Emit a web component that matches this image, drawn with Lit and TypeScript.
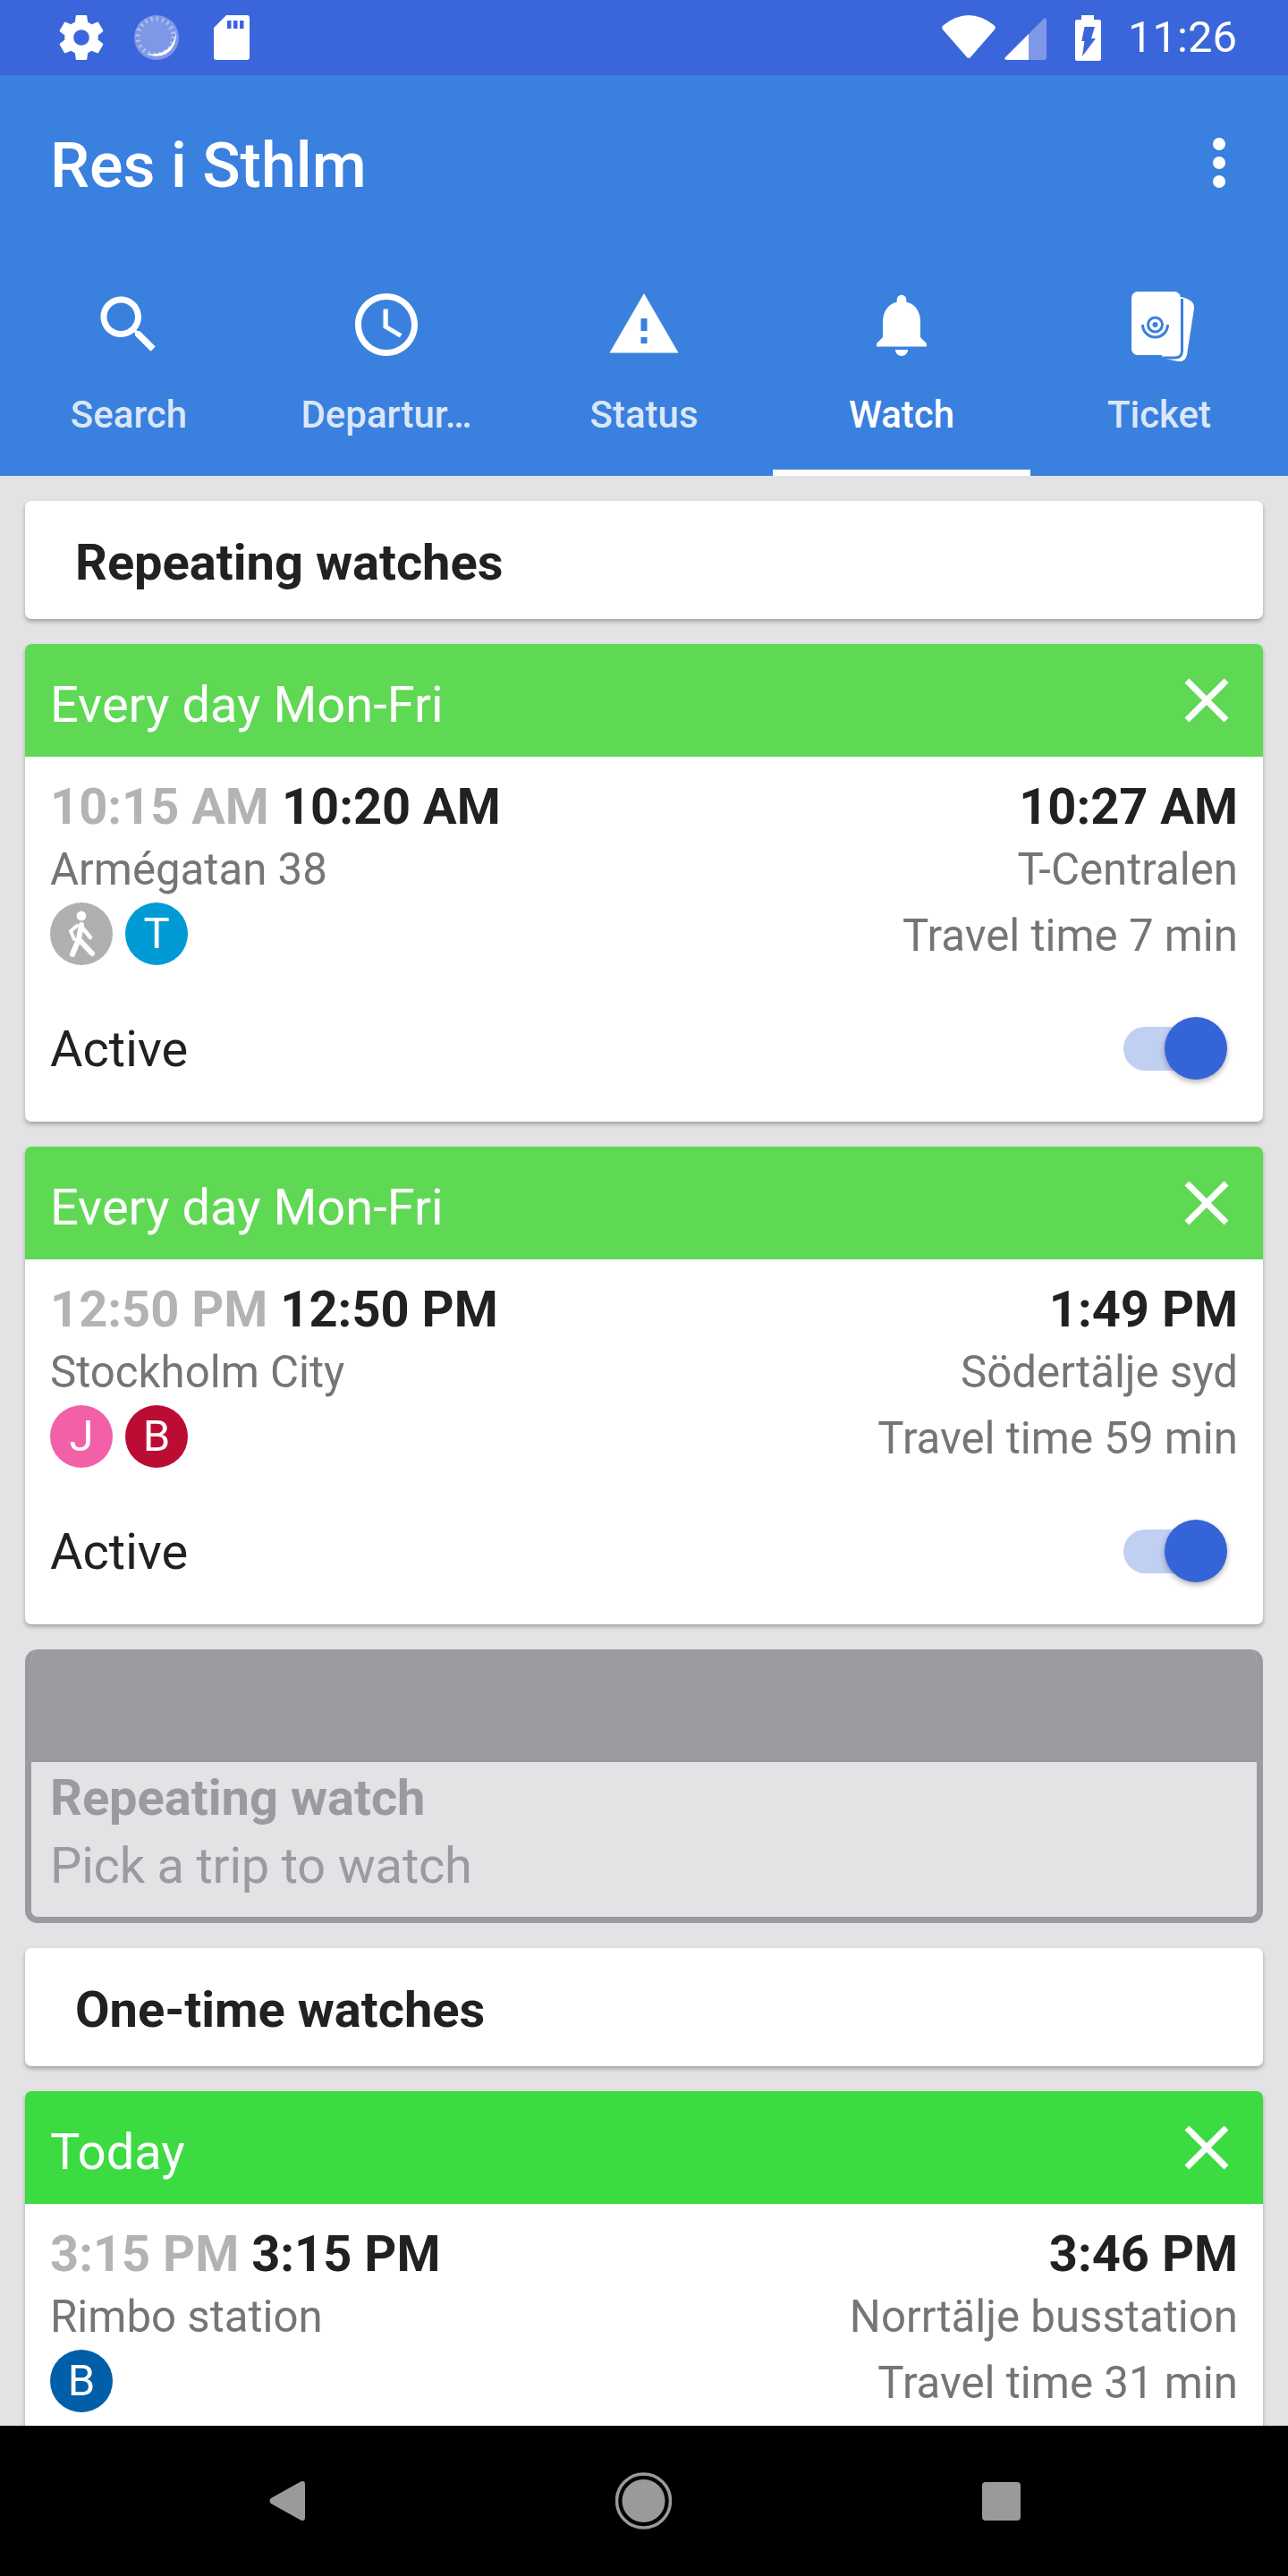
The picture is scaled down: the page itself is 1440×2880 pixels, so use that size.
import { LitElement, html, css } from "lit";
import { customElement } from "lit/decorators.js";

const icon = (d: string) => html`<svg viewBox="0 0 24 24" fill="#fff"><path d=${d}></path></svg>`;

const walk = html`<svg class="walk" viewBox="0 0 70 70" fill="none" stroke="#fff" stroke-width="4.5" stroke-linecap="round" stroke-linejoin="round">
  <circle cx="35" cy="15" r="5.4" fill="#fff" stroke="none"></circle>
  <path d="M35 25 L32 41 L47 57" stroke-width="6"></path>
  <path d="M32 41 L25 58" stroke-width="6"></path>
  <path d="M35 27 L45 39"></path>
  <path d="M30 26 L23 32 L27 41" stroke-width="4"></path>
</svg>`;

interface Trip {
  header: string; today?: boolean; planned: string; dep: string; arr: string; from: string; to: string; time: string;
  lines: { t: string; c: string }[];
}
const repeating: Trip[] = [
  { header: "Every day Mon-Fri", planned: "10:15 AM", dep: "10:20 AM", arr: "10:27 AM", from: "Armégatan 38", to: "T-Centralen", time: "Travel time 7 min", lines: [{ t: "walk", c: "#b0afb1" }, { t: "T", c: "#009bd5" }] },
  { header: "Every day Mon-Fri", planned: "12:50 PM", dep: "12:50 PM", arr: "1:49 PM", from: "Stockholm City", to: "Södertälje syd", time: "Travel time 59 min", lines: [{ t: "J", c: "#f260a8" }, { t: "B", c: "#bb0c33" }] },
];
const oneTime: Trip[] = [
  { header: "Today", today: true, planned: "3:15 PM", dep: "3:15 PM", arr: "3:46 PM", from: "Rimbo station", to: "Norrtälje busstation", time: "Travel time 31 min", lines: [{ t: "B", c: "#005fa8" }] },
];

@customElement("app-root")
export class AppRoot extends LitElement {
  static styles = css`
    :host { display: block; width: 1440px; height: 2880px; overflow: hidden; font-family: Roboto, "Noto Sans", sans-serif; background: #e3e2e4; }
    .screen { width: 1440px; height: 2880px; display: flex; flex-direction: column; }
    .status { height: 84px; flex: none; background: #3b66db; display: flex; align-items: center; padding: 0 57px 0 66px; box-sizing: border-box; color: #fff; }
    .status .left { display: flex; align-items: center; }
    .status .right { margin-left: auto; display: flex; align-items: center; }
    .clock { font-size: 49px; margin-left: 30px; line-height: 84px; }
    .status svg { display: block; flex: none; }
    .ml34 { margin-left: 34px; }
    .ml39 { margin-left: 39px; }
    .ml10 { margin-left: 10px; }
    .ml32 { margin-left: 32px; }
    .appbar { flex: none; background: #3a80de; }
    .toolbar { height: 196px; display: flex; align-items: center; justify-content: space-between; padding: 0 70px 0 56px; box-sizing: border-box; color: #fff; font-size: 70px; font-weight: 500; }
    .toolbar span { padding-top: 6px; }
    .dots { width: 14px; display: flex; flex-direction: column; gap: 7px; }
    .dots i { width: 14px; height: 14px; border-radius: 50%; background: #fff; display: block; }
    .tabs { height: 252px; display: grid; grid-template-columns: repeat(5, 288px); }
    .tab { display: flex; flex-direction: column; align-items: center; color: rgba(255,255,255,.82); font-size: 42px; font-weight: 500; position: relative; }
    .tab.on { color: #fff; }
    .tab.on::after { content: ""; position: absolute; left: 0; right: 0; bottom: 0; height: 7px; background: #fff; }
    .tab svg { width: 84px; height: 84px; margin-top: 41px; display: block; }
    .tab span { margin-top: 34px; line-height: 50px; }
    .content { flex: 1; min-height: 0; overflow: hidden; padding: 28px 28px 0; display: flex; flex-direction: column; gap: 28px; }
    .card { flex: none; background: #fff; border-radius: 7px; box-shadow: 0 3px 5px rgba(0,0,0,.28); overflow: hidden; }
    .title { height: 132px; display: flex; align-items: center; padding: 6px 0 0 56px; font-size: 56px; font-weight: 700; color: #212121; box-sizing: border-box; }
    .head { height: 126px; background: #5fd854; color: #fff; font-size: 56px; display: flex; align-items: center; justify-content: space-between; padding: 0 28px; box-sizing: border-box; }
    .head span { padding-top: 10px; }
    .head.today { background: #3cdb42; }
    .head svg { width: 84px; height: 84px; margin-right: -7px; display: block; }
    .body { padding: 21px 28px 18px; }
    .body.long { min-height: 420px; }
    .row { display: flex; justify-content: space-between; }
    .times { font-size: 56px; font-weight: 700; color: #212121; line-height: 70px; }
    .times .p { color: #b3b3b5; margin-right: 14px; }
    .sub { font-size: 49.2px; color: #757575; line-height: 70px; }
    .info { margin-top: 2px; }
    .info > span { margin-top: 2px; }
    .badges { display: flex; gap: 14px; }
    .badge { width: 70px; height: 70px; border-radius: 50%; color: #fff; font-size: 49px; display: flex; align-items: center; justify-content: center; }
    .walk { width: 70px; height: 70px; display: block; }
    .active { height: 126px; margin-top: 29px; display: flex; align-items: center; justify-content: space-between; font-size: 56px; color: #212121; }
    .switch { width: 116px; height: 70px; position: relative; margin-right: 12px; top: -1px; }
    .switch .track { position: absolute; left: 0; top: 11px; width: 105px; height: 49px; border-radius: 25px; background: #c0cff2; }
    .switch .thumb { position: absolute; right: 0; top: 0; width: 70px; height: 70px; border-radius: 50%; background: #3564d8; box-shadow: 0 3px 6px rgba(0,0,0,.3); }
    .ghost { flex: none; border-radius: 14px; border: solid #9c9a9e; border-width: 0 7px 7px; background: #e3e2e4; overflow: hidden; }
    .ghost .bar { height: 126px; background: #9c9a9e; margin: 0 -7px; }
    .ghost .in { padding: 2px 21px 0; color: #9c9a9e; height: 173px; box-sizing: border-box; }
    .ghost .a { font-size: 56px; font-weight: 700; line-height: 76px; }
    .ghost .b { font-size: 56px; line-height: 76px; letter-spacing: -.2px; }
    .nav { height: 168px; flex: none; background: #000; display: flex; align-items: center; padding-left: 301px; gap: 347px; box-sizing: border-box; }
    .nav svg { display: block; flex: none; }
  `;

  private trip(t: Trip) {
    return html`<div class="card">
      <div class="head ${t.today ? "today" : ""}"><span>${t.header}</span>${icon("M19 6.41L17.59 5 12 10.59 6.41 5 5 6.41 10.59 12 5 17.59 6.41 19 12 13.41 17.59 19 19 17.59 13.41 12z")}</div>
      <div class="body ${t.today ? "long" : ""}">
        <div class="row times"><span><span class="p">${t.planned}</span>${t.dep}</span><span>${t.arr}</span></div>
        <div class="row sub"><span>${t.from}</span><span>${t.to}</span></div>
        <div class="row sub info">
          <div class="badges">${t.lines.map(l => html`<div class="badge" style="background:${l.c}">${l.t === "walk" ? walk : l.t}</div>`)}</div>
          <span>${t.time}</span>
        </div>
        ${t.today ? "" : html`<div class="active"><span>Active</span><div class="switch"><div class="track"></div><div class="thumb"></div></div></div>`}
      </div>
    </div>`;
  }

  render() {
    return html`<div class="screen">
      <div class="status">
        <div class="left">
          <svg width="50" height="50" viewBox="2 2 20 20" fill="#fff"><path fill-rule="evenodd" d="M19.43 12.98c.04-.32.07-.64.07-.98s-.03-.66-.07-.98l2.11-1.65c.19-.15.24-.42.12-.64l-2-3.46c-.12-.22-.39-.3-.61-.22l-2.49 1c-.52-.4-1.08-.73-1.69-.98l-.38-2.65C14.46 2.18 14.25 2 14 2h-4c-.25 0-.46.18-.49.42l-.38 2.65c-.61.25-1.17.59-1.69.98l-2.49-1c-.23-.09-.49 0-.61.22l-2 3.46c-.13.22-.07.49.12.64l2.11 1.65c-.04.32-.07.65-.07.98s.03.66.07.98l-2.11 1.65c-.19.15-.24.42-.12.64l2 3.46c.12.22.39.3.61.22l2.49-1c.52.4 1.08.73 1.69.98l.38 2.65c.03.24.24.42.49.42h4c.25 0 .46-.18.49-.42l.38-2.65c.61-.25 1.17-.59 1.69-.98l2.49 1c.23.09.49 0 .61-.22l2-3.46c.12-.22.07-.49-.12-.64l-2.11-1.65zM12 15.5c-1.93 0-3.5-1.57-3.5-3.5s1.57-3.5 3.5-3.5 3.5 1.57 3.5 3.5-1.57 3.5-3.5 3.5z"></path></svg>
          <svg class="ml34" width="50" height="50" viewBox="0 0 50 50"><circle cx="25" cy="25" r="25" fill="#7f98e6"></circle><circle cx="24" cy="24" r="20" fill="none" stroke="#b4c2f0" stroke-width="5" stroke-dasharray="2 4.3"></circle><path d="M46 14 C49 30 36 47 14 43 C30 51 51 41 46 14Z" fill="#fff"></path></svg>
          <svg class="ml39" width="40" height="50" viewBox="0 0 40 50"><path fill="#fff" fill-rule="evenodd" d="M14 0H37a3 3 0 0 1 3 3V47a3 3 0 0 1-3 3H3a3 3 0 0 1-3-3V14zM15 6v9h4.500V6zm7 0v9h4.500V6zm7 0v9h4.500V6z"></path></svg>
        </div>
        <div class="right">
          <svg width="60" height="50" viewBox="0 0 60 50"><path fill="#fff" d="M1 16 Q-1 13 2 11 Q30 -11 58 11 Q61 13 59 16 L32 47 Q30 49 28 47Z"></path></svg>
          <svg class="ml10" width="47" height="47" viewBox="0 0 47 47" style="margin-top:3px"><path fill="#7f98e6" d="M27 18 L44 1 Q47 -1 47 3 V44 Q47 47 44 47 H27Z"></path><path fill="#fff" d="M27 18 V47 H3 Q-1 47 1 44Z"></path></svg>
          <svg class="ml32" width="29" height="51" viewBox="0 0 29 51"><path fill="#fff" fill-rule="evenodd" d="M7 0H21V5H27a2 2 0 0 1 2 2V49a2 2 0 0 1-2 2H2a2 2 0 0 1-2-2V7a2 2 0 0 1 2-2H7zM10.500 13 H22 L18 26 H23 L8 46 L10.500 29 H7.300Z"></path></svg>
          <span class="clock">11:26</span>
        </div>
      </div>
      <div class="appbar">
        <div class="toolbar"><span>Res i Sthlm</span><div class="dots"><i></i><i></i><i></i></div></div>
        <div class="tabs">
          <div class="tab">${icon("M15.5 14h-.79l-.28-.27C15.41 12.59 16 11.11 16 9.5 16 5.91 13.09 3 9.5 3S3 5.91 3 9.5 5.91 16 9.5 16c1.61 0 3.09-.59 4.23-1.57l.27.28v.79l5 4.99L20.49 19l-4.99-5zm-6 0C7.01 14 5 11.99 5 9.5S7.01 5 9.5 5 14 7.01 14 9.5 11.99 14 9.5 14z")}<span>Search</span></div>
          <div class="tab">${icon("M11.99 2C6.47 2 2 6.48 2 12s4.47 10 9.99 10C17.52 22 22 17.52 22 12S17.52 2 11.99 2zM12 20c-4.42 0-8-3.58-8-8s3.58-8 8-8 8 3.58 8 8-3.58 8-8 8zm.5-13H11v6l5.25 3.15.75-1.23-4.5-2.67z")}<span>Departur…</span></div>
          <div class="tab">${icon("M1 21h22L12 2 1 21zm12-3h-2v-2h2v2zm0-4h-2v-4h2v4z")}<span>Status</span></div>
          <div class="tab on">${icon("M12 22c1.1 0 2-.9 2-2h-4c0 1.1.9 2 2 2zm6-6v-5c0-3.07-1.63-5.64-4.5-6.32V4c0-.83-.67-1.5-1.5-1.5s-1.5.67-1.5 1.5v.68C7.64 5.36 6 7.92 6 11v5l-2 2v1h16v-1l-2-2z")}<span>Watch</span></div>
          <div class="tab">
            <svg viewBox="0 0 84 84" fill="none">
              <path d="M66 11 Q82 14 81 24 L73 76 Q71 84 63 83 L44 79 L60 40Z" fill="#fff"></path>
              <rect x="11" y="5" width="55" height="71" rx="7" fill="#fff"></rect>
              <path d="M66 12 V70 Q66 78 58 78 H42" stroke="#3a80de" stroke-width="3" transform="translate(1.500,1)"></path>
              <circle cx="37.500" cy="42" r="8" stroke="#3a80de" stroke-width="3"></circle>
              <circle cx="37.500" cy="42" r="3" fill="#3a80de"></circle>
              <path d="M23.500 42 A14 14 0 0 0 51.500 42" stroke="#3a80de" stroke-width="3"></path>
            </svg>
            <span>Ticket</span>
          </div>
        </div>
      </div>
      <div class="content">
        <div class="card title">Repeating watches</div>
        ${repeating.map(t => this.trip(t))}
        <div class="ghost"><div class="bar"></div><div class="in"><div class="a">Repeating watch</div><div class="b">Pick a trip to watch</div></div></div>
        <div class="card title">One-time watches</div>
        ${oneTime.map(t => this.trip(t))}
      </div>
      <div class="nav">
        <svg width="40" height="46" viewBox="0 0 41 46"><path fill="#9a9a9a" d="M2 20 L36 1 Q41 -1 41 4 V42 Q41 47 36 45 L2 26 Q-1 23 2 20Z"></path></svg>
        <svg width="63" height="64" viewBox="0 0 63 64"><circle cx="31.500" cy="32" r="30" fill="none" stroke="#9a9a9a" stroke-width="3.500"></circle><circle cx="31.500" cy="32" r="24" fill="#9a9a9a"></circle></svg>
        <svg width="43" height="43" viewBox="0 0 43 43"><rect width="43" height="43" rx="4" fill="#9a9a9a"></rect></svg>
      </div>
    </div>`;
  }
}
